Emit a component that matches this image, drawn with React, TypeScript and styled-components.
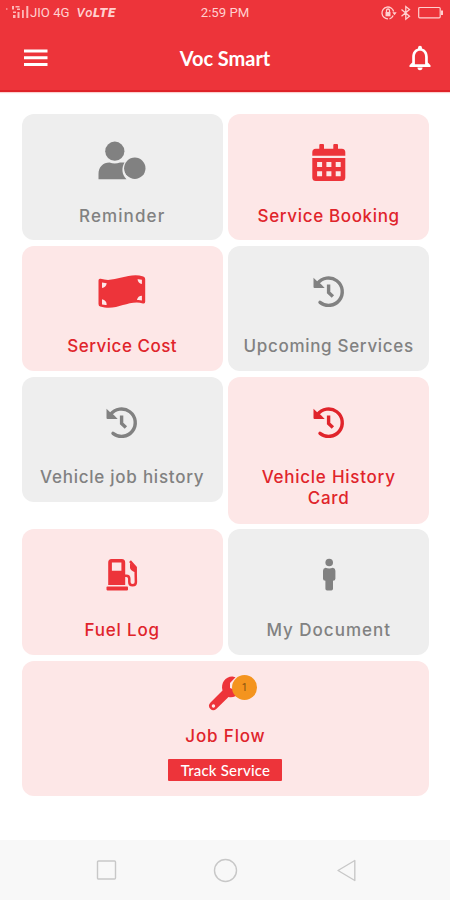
import React from "react";
import styled, { createGlobalStyle } from "styled-components";

const RED = "#ed343a";
const LABEL_RED = "#e0242b";
const GREY = "#818181";

const GlobalStyle = createGlobalStyle`
  * { box-sizing: border-box; }
  body { margin: 0; background: #fff; }
`;

const Screen = styled.div`
  display: flex;
  flex-direction: column;
  width: 450px;
  height: 900px;
  overflow: hidden;
  background: #fff;
  font-family: Inter, "Liberation Sans", sans-serif;
`;

const Header = styled.header`
  height: 92px;
  flex: none;
  background: ${RED};
  color: #fff;
  border-bottom: 2px solid #df2228;
  box-shadow: 0 1px 1px #fbd0cf;
`;

const StatusBar = styled.div`
  display: grid;
  grid-template-columns: 1fr 60px 1fr;
  align-items: center;
  height: 26px;
  padding: 0 6px;
  color: #ffd0cf;
  font: 400 13.2px/26px Roboto, sans-serif;
`;

const Carrier = styled.div`
  display: flex;
  align-items: center;
  white-space: nowrap;
`;

const Volte = styled.span`
  margin-left: 7px;
  font-weight: 500;
  font-style: italic;
  font-size: 13.2px;
  letter-spacing: 0.6px;
  b { font-weight: 900; }
`;

const Clock = styled.div`
  text-align: center;
  white-space: nowrap;
`;

const StatusIcons = styled.div`
  display: flex;
  justify-content: flex-end;
`;

const AppBar = styled.div`
  display: grid;
  grid-template-columns: 60px 1fr 60px;
  align-items: center;
  height: 64px;
  padding: 0 18px 0 22px;
`;

const IconButton = styled.button<{ $end?: boolean }>`
  display: flex;
  justify-content: ${(p) => (p.$end ? "flex-end" : "flex-start")};
  padding: 0;
  border: 0;
  background: none;
  color: #fff;
`;

const Title = styled.h1`
  margin: 0;
  padding-right: 4px;
  text-align: center;
  font: 700 20px/24px Lato, sans-serif;
  letter-spacing: -0.05px;
`;

const Menu = styled.main`
  display: grid;
  grid-template-columns: 201px 201px;
  grid-template-rows: 126px 125px 147px 125.5px 135.5px;
  gap: 6px 5.5px;
  row-gap: 5.8px;
  align-items: start;
  flex: 1;
  padding: 22px 0 0 21.7px;
`;

const Card = styled.section<{ $red?: boolean; $h?: number; $wide?: boolean }>`
  display: flex;
  flex-direction: column;
  align-items: center;
  height: ${(p) => (p.$h ? p.$h + "px" : "100%")};
  grid-column: ${(p) => (p.$wide ? "1 / -1" : "auto")};
  padding-top: ${(p) => (p.$wide ? "14px" : "22px")};
  border-radius: 12px;
  background: ${(p) => (p.$red ? "#fde7e7" : "#eeeeee")};
  color: ${(p) => (p.$red ? RED : GREY)};
`;

const Label = styled.div<{ $red?: boolean; $track?: number; $top?: number }>`
  margin-top: ${(p) => p.$top ?? 20.5}px;
  color: ${(p) => (p.$red ? LABEL_RED : GREY)};
  font-size: 17px;
  font-weight: 500;
  line-height: 21.3px;
  letter-spacing: ${(p) => p.$track ?? 0.7}px;
  text-align: center;
  white-space: pre-line;
`;

const IconWrap = styled.div`
  position: relative;
  height: 40px;
`;

const Badge = styled.span`
  position: absolute;
  left: 30.5px;
  top: 0;
  width: 25px;
  height: 25px;
  border-radius: 50%;
  background: #f4941e;
  color: #81500f;
  font: 400 10px/25px Roboto, sans-serif;
  text-align: center;
`;

const TrackButton = styled.button`
  width: 114px;
  height: 22px;
  margin-top: 12px;
  padding: 0;
  border: 0;
  border-radius: 1px;
  background: ${RED};
  color: #fff;
  font: 500 15px/22px Lato, sans-serif;
  letter-spacing: 0.2px;
`;

const NavBar = styled.nav`
  display: grid;
  grid-template-columns: repeat(3, 120px);
  justify-content: center;
  justify-items: center;
  align-items: center;
  height: 60px;
  flex: none;
  background: #f8f8f8;
`;

const Icon = styled.svg`
  display: block;
  flex: none;
  overflow: visible;
`;

function Picture({ children }: { children: React.ReactNode }) {
  return <Icon width="48" height="48" viewBox="0 0 48 48" fill="currentColor">{children}</Icon>;
}

const Reminder = () => (
  <Picture>
    <circle cx="16.8" cy="15.2" r="9.6" />
    <path d="M.5 43.2V38c0-7 4.500-11.500 11-11.500 3.500 1.300 7 1.300 10.500 0h4.500c-3 5-3 12 2 16.700z" />
    <circle cx="36.800" cy="32.300" r="10.700" />
  </Picture>
);

const Calendar = () => (
  <Picture>
    <path fillRule="evenodd" d="M7.300 19.700v-3.500a3.500 3.500 0 0 1 3.500-3.500h3.500V9q0-1 1-1h2.700q1 0 1 1v3.700h9.300V9q0-1 1-1H32q1 0 1 1v3.700h3.800a3.500 3.500 0 0 1 3.500 3.500v3.500zM7.300 22h33v19.500a3.500 3.500 0 0 1-3.500 3.500h-26a3.500 3.500 0 0 1-3.500-3.500zM12.100 26v5h5v-5zM21.400 26v5h5v-5zM30.700 26v5h5v-5zM12.100 35.300v5h5v-5zM21.400 35.300v5h5v-5zM30.700 35.300v5h5v-5z" />
  </Picture>
);

const Money = () => (
  <Picture>
    <path fillRule="evenodd" d="M2.700 10.800C17 15.500 30 3.800 45.300 8.500Q47.200 9.100 47.200 11v22.800q0 2.200-2.200 1.600C30 31.500 18.500 43.800 2.200 38.500Q.5 38 .5 36V12.500q0-2.200 2.200-1.700zM4 14.500v5.500q4-.5 4.700-4.800zM4 31.200v5.300q2.300.6 4.700.4 0-4.700-4.700-5.700zM39.500 11.300q.6 4 4.400 4.800v-4.400q-2.200-.6-4.400-.4zM38.900 32.100q2.700-.2 5 .3v-4.700q-4 0-5 4.400z" />
  </Picture>
);

const History = ({ red }: { red?: boolean }) => (
  <Icon width="48" height="48" viewBox="0 0 48 48" fill={red ? LABEL_RED : "currentColor"} stroke={red ? LABEL_RED : "currentColor"}>
    <g fill="none" strokeWidth="3.400">
      <path d="M12.500 15.600A13.700 13.700 0 1 1 15 34.400" strokeLinecap="round" />
      <path d="M23.600 16.500v8l4.300 4" />
    </g>
    <path stroke="none" d="M8.500 9.800l3.400 3.200 4 3 3.800 4H9.500q-1 0-1-1z" />
  </Icon>
);

const Fuel = () => (
  <Picture>
    <path fillRule="evenodd" d="M10.200 34V11.500Q10.200 8 13.500 8h10.300q3.400 0 3.400 3.500V34zM13.900 11.500v8.200h9.500v-8.200z" />
    <rect x="8.500" y="35.600" width="21.500" height="3.800" rx=".8" />
    <path d="M27 24.800h1.300q3 0 3 3.200v3q0 3.300 3.300 3.300t3.300-3.300l-.2-8V16.500L32 10.200" fill="none" stroke="currentColor" strokeWidth="2.500" />
    <path d="M32 12v4.500q0 3.200 5.700 4.800v-5z" />
  </Picture>
);

const Person = () => (
  <Picture>
    <circle cx="24.200" cy="11.500" r="3.800" />
    <path d="M20.500 16.800q3.700 1.400 7.400 0 2.500.5 2.500 3v8q0 2-2.400 2v8q0 1.700-1.700 1.700h-4.200q-1.700 0-1.700-1.700v-8q-2.400 0-2.400-2v-8q0-2.500 2.500-3z" />
  </Picture>
);

type Entry = {
  label: string;
  icon: React.ComponentType<{ red?: boolean }>;
  red?: boolean;
  h?: number;
  track?: number;
  top?: number;
};

const cards: Entry[] = [
  { label: "Reminder", icon: Reminder, track: 1.1, top: 21.5 },
  { label: "Service Booking", icon: Calendar, red: true, track: 0.65, top: 21.5 },
  { label: "Service Cost", icon: Money, red: true, track: 0.5 },
  { label: "Upcoming Services", icon: History, track: 0.68 },
  { label: "Vehicle job history", icon: History, h: 125, track: 0.75 },
  { label: "Vehicle History\nCard", icon: History, red: true, track: 0.75 },
  { label: "Fuel Log", icon: Fuel, red: true, track: 0.8 },
  { label: "My Document", icon: Person, track: 1.0 },
];

export default function App() {
  return (
    <Screen>
      <GlobalStyle />
      <Header>
        <StatusBar>
          <Carrier>
            <Icon width="24" height="14" viewBox="0 0 24 14" fill="currentColor">
              <path d="M0 2h1.500v2H0z" opacity=".5" />
              <path d="M6 0h2v3.500H6zM9.500 0h4v1.500h-4zM11 2.500h3V4h-3zM7 5.500h3V7H7zM7 9h2.500v3H7zM11.500 6h2v6h-2zM16 4h1.800v8H16zM20.300 0h2v12h-2z" opacity=".85" />
            </Icon>
            JIO 4G
            <Volte>Vo<b>LTE</b></Volte>
          </Carrier>
          <Clock>2:59 PM</Clock>
          <StatusIcons>
            <Icon width="63" height="16" viewBox="0 0 63 16" fill="none" stroke="currentColor" strokeWidth="1.300">
              <path d="M7 13.800A5.900 5.900 0 1 1 12.600 6.500M8.500 13.800q2.500-.6 3.700-3.300" />
              <path d="M11.300 7.200h4.400l-2.200 3z" fill="currentColor" stroke="none" />
              <path d="M4.500 7h5v4.300h-5z" fill="currentColor" stroke="none" />
              <path d="M5.500 7V5.500a1.500 1.500 0 0 1 3 0V7M20.500 4.500l8 6.700-3.700 3V1.500l3.700 3-8 6.700" />
              <rect x="37.700" y="2.500" width="21.500" height="10.300" rx="1" strokeWidth="1.200" />
              <path d="M61 5.500V10" strokeWidth="2" />
            </Icon>
          </StatusIcons>
        </StatusBar>
        <AppBar>
          <IconButton aria-label="Menu">
            <Icon width="26" height="20" viewBox="0 0 26 20" fill="none" stroke="currentColor" strokeWidth="3">
              <path d="M2 3h23.500M2 9.700h23.500M2 16.400h23.500" />
            </Icon>
          </IconButton>
          <Title>Voc Smart</Title>
          <IconButton $end aria-label="Notifications">
            <Icon width="24" height="26" viewBox="0 0 24 26" fill="currentColor">
              <path fillRule="evenodd" d="M12 .7q2 0 2 2.200v.6c3.700 1 5.800 4 5.800 8.500v5.500l2.700 2.700V22h-21v-1.800l2.700-2.700V12c0-4.500 2.100-7.500 5.800-8.500v-.6Q10 .7 12 .7zM12 5.700c-3.200 0-5.100 2.700-5.100 6.300v7.200h10.200V12c0-3.600-1.900-6.300-5.100-6.300zM9.500 22.500h5q0 2.700-2.500 2.700T9.500 22.500z" />
            </Icon>
          </IconButton>
        </AppBar>
      </Header>
      <Menu>
        {cards.map(({ label, icon: Glyph, red, h, track, top }) => (
          <Card key={label} $red={red} $h={h}>
            <Glyph red={red} />
            <Label $red={red} $track={track} $top={top}>{label}</Label>
          </Card>
        ))}
        <Card $red $wide>
          <IconWrap>
            <Icon width="48" height="40" viewBox="0 0 48 40" fill="currentColor">
              <path fillRule="evenodd" d="M9.500 27.500L21.500 15.500C19.500 8 24.500 1.300 31.500 1.500l3 .8L29 8v5l5 2 6-5c1 8-5 13.500-12.500 12L15.500 33.700q-3.200 3-6 .4-3.200-3.300 0-6.600zM12.400 29.300a1.700 1.700 0 1 0 .1 0z" />
            </Icon>
            <Badge>1</Badge>
          </IconWrap>
          <Label $red $top={11} $track={0.85}>Job Flow</Label>
          <TrackButton>Track Service</TrackButton>
        </Card>
      </Menu>
      <NavBar>
        <Icon width="24" height="24" viewBox="0 0 24 24" fill="none" stroke="#c8c8c8" strokeWidth="1.400">
          <rect x="4.500" y="3" width="18" height="18" rx="1" />
        </Icon>
        <Icon width="24" height="24" viewBox="0 0 24 24" fill="none" stroke="#c8c8c8" strokeWidth="1.400">
          <circle cx="12.500" cy="12.500" r="11" />
        </Icon>
        <Icon width="24" height="24" viewBox="0 0 24 24" fill="none" stroke="#c8c8c8" strokeWidth="1.400" strokeLinejoin="round">
          <path d="M21.800 2.500v20L5 12.500z" />
        </Icon>
      </NavBar>
    </Screen>
  );
}
